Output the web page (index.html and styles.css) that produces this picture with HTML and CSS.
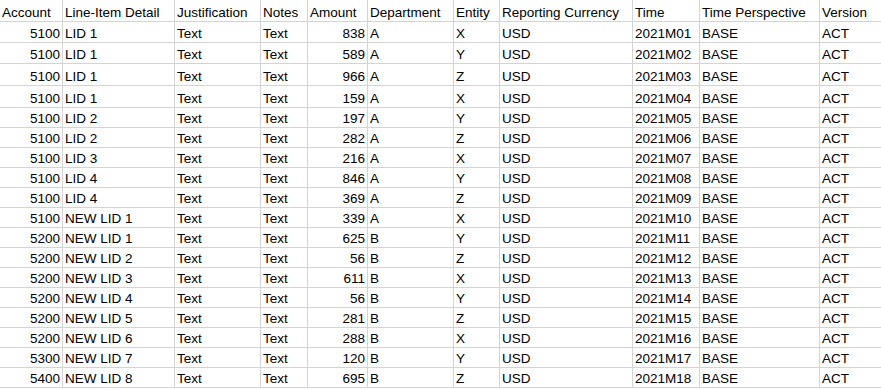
FILE: index.html
```html
<!DOCTYPE html>
<html>
<head>
<meta charset="utf-8">
<link rel="stylesheet" href="styles.css">
</head>
<body>
<div class="sheet">
  <div class="row head">
    <div class="c">Account</div><div class="c">Line-Item Detail</div><div class="c">Justification</div><div class="c">Notes</div><div class="c">Amount</div><div class="c">Department</div><div class="c">Entity</div><div class="c">Reporting Currency</div><div class="c">Time</div><div class="c">Time Perspective</div><div class="c">Version</div>
  </div>
  <div class="row"><div class="c r">5100</div><div class="c">LID 1</div><div class="c">Text</div><div class="c">Text</div><div class="c r">838</div><div class="c">A</div><div class="c">X</div><div class="c">USD</div><div class="c">2021M01</div><div class="c">BASE</div><div class="c">ACT</div></div>
  <div class="row"><div class="c r">5100</div><div class="c">LID 1</div><div class="c">Text</div><div class="c">Text</div><div class="c r">589</div><div class="c">A</div><div class="c">Y</div><div class="c">USD</div><div class="c">2021M02</div><div class="c">BASE</div><div class="c">ACT</div></div>
  <div class="row"><div class="c r">5100</div><div class="c">LID 1</div><div class="c">Text</div><div class="c">Text</div><div class="c r">966</div><div class="c">A</div><div class="c">Z</div><div class="c">USD</div><div class="c">2021M03</div><div class="c">BASE</div><div class="c">ACT</div></div>
  <div class="row"><div class="c r">5100</div><div class="c">LID 1</div><div class="c">Text</div><div class="c">Text</div><div class="c r">159</div><div class="c">A</div><div class="c">X</div><div class="c">USD</div><div class="c">2021M04</div><div class="c">BASE</div><div class="c">ACT</div></div>
  <div class="row"><div class="c r">5100</div><div class="c">LID 2</div><div class="c">Text</div><div class="c">Text</div><div class="c r">197</div><div class="c">A</div><div class="c">Y</div><div class="c">USD</div><div class="c">2021M05</div><div class="c">BASE</div><div class="c">ACT</div></div>
  <div class="row"><div class="c r">5100</div><div class="c">LID 2</div><div class="c">Text</div><div class="c">Text</div><div class="c r">282</div><div class="c">A</div><div class="c">Z</div><div class="c">USD</div><div class="c">2021M06</div><div class="c">BASE</div><div class="c">ACT</div></div>
  <div class="row"><div class="c r">5100</div><div class="c">LID 3</div><div class="c">Text</div><div class="c">Text</div><div class="c r">216</div><div class="c">A</div><div class="c">X</div><div class="c">USD</div><div class="c">2021M07</div><div class="c">BASE</div><div class="c">ACT</div></div>
  <div class="row"><div class="c r">5100</div><div class="c">LID 4</div><div class="c">Text</div><div class="c">Text</div><div class="c r">846</div><div class="c">A</div><div class="c">Y</div><div class="c">USD</div><div class="c">2021M08</div><div class="c">BASE</div><div class="c">ACT</div></div>
  <div class="row"><div class="c r">5100</div><div class="c">LID 4</div><div class="c">Text</div><div class="c">Text</div><div class="c r">369</div><div class="c">A</div><div class="c">Z</div><div class="c">USD</div><div class="c">2021M09</div><div class="c">BASE</div><div class="c">ACT</div></div>
  <div class="row"><div class="c r">5100</div><div class="c">NEW LID 1</div><div class="c">Text</div><div class="c">Text</div><div class="c r">339</div><div class="c">A</div><div class="c">X</div><div class="c">USD</div><div class="c">2021M10</div><div class="c">BASE</div><div class="c">ACT</div></div>
  <div class="row"><div class="c r">5200</div><div class="c">NEW LID 1</div><div class="c">Text</div><div class="c">Text</div><div class="c r">625</div><div class="c">B</div><div class="c">Y</div><div class="c">USD</div><div class="c">2021M11</div><div class="c">BASE</div><div class="c">ACT</div></div>
  <div class="row"><div class="c r">5200</div><div class="c">NEW LID 2</div><div class="c">Text</div><div class="c">Text</div><div class="c r">56</div><div class="c">B</div><div class="c">Z</div><div class="c">USD</div><div class="c">2021M12</div><div class="c">BASE</div><div class="c">ACT</div></div>
  <div class="row"><div class="c r">5200</div><div class="c">NEW LID 3</div><div class="c">Text</div><div class="c">Text</div><div class="c r">611</div><div class="c">B</div><div class="c">X</div><div class="c">USD</div><div class="c">2021M13</div><div class="c">BASE</div><div class="c">ACT</div></div>
  <div class="row"><div class="c r">5200</div><div class="c">NEW LID 4</div><div class="c">Text</div><div class="c">Text</div><div class="c r">56</div><div class="c">B</div><div class="c">Y</div><div class="c">USD</div><div class="c">2021M14</div><div class="c">BASE</div><div class="c">ACT</div></div>
  <div class="row"><div class="c r">5200</div><div class="c">NEW LID 5</div><div class="c">Text</div><div class="c">Text</div><div class="c r">281</div><div class="c">B</div><div class="c">Z</div><div class="c">USD</div><div class="c">2021M15</div><div class="c">BASE</div><div class="c">ACT</div></div>
  <div class="row"><div class="c r">5200</div><div class="c">NEW LID 6</div><div class="c">Text</div><div class="c">Text</div><div class="c r">288</div><div class="c">B</div><div class="c">X</div><div class="c">USD</div><div class="c">2021M16</div><div class="c">BASE</div><div class="c">ACT</div></div>
  <div class="row"><div class="c r">5300</div><div class="c">NEW LID 7</div><div class="c">Text</div><div class="c">Text</div><div class="c r">120</div><div class="c">B</div><div class="c">Y</div><div class="c">USD</div><div class="c">2021M17</div><div class="c">BASE</div><div class="c">ACT</div></div>
  <div class="row"><div class="c r">5400</div><div class="c">NEW LID 8</div><div class="c">Text</div><div class="c">Text</div><div class="c r">695</div><div class="c">B</div><div class="c">Z</div><div class="c">USD</div><div class="c">2021M18</div><div class="c">BASE</div><div class="c">ACT</div></div>
</div>
</body>
</html>
```
FILE: styles.css
```css
html, body {
  margin: 0;
  padding: 0;
  background: #ffffff;
}
body {
  font-family: "Liberation Sans", Arial, sans-serif;
  font-size: 13.5px;
  color: #000000;
}
.sheet {
  display: grid;
  grid-template-columns: 62px 111px 85px 46px 59px 85px 45px 132px 66px 119px 61px;
  grid-template-rows: 21px 20px 20px 21px 21px repeat(14, 19px);
  gap: 1px;
  background: #d4d4d4;
  padding-bottom: 1px;
  width: 881px;
}
.row {
  display: contents;
}
.c {
  background: #ffffff;
  display: flex;
  align-items: flex-end;
  line-height: 16px;
  padding: 0 2px 0 2px;
  white-space: nowrap;
  overflow: hidden;
}
.r {
  justify-content: flex-end;
}
```
